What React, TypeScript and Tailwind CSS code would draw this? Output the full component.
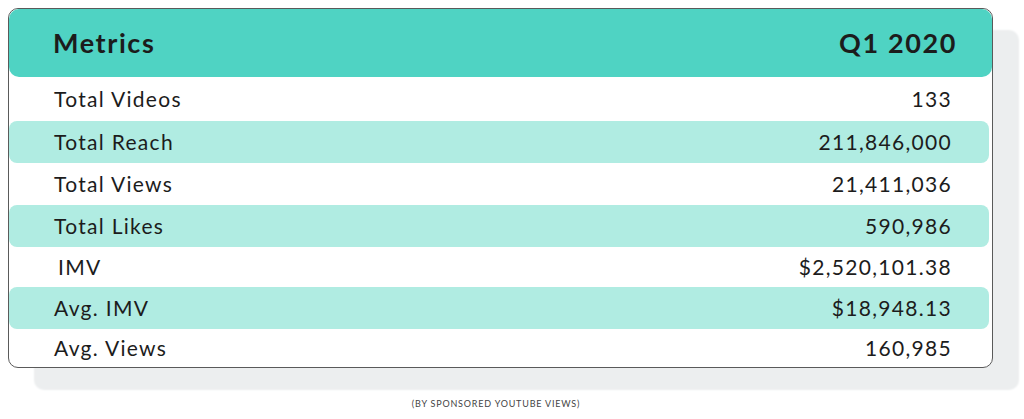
const rows = [
  { label: "Total Videos", value: "133", band: false, h: "h-[44px]" },
  { label: "Total Reach", value: "211,846,000", band: true, h: "h-[42px]" },
  { label: "Total Views", value: "21,411,036", band: false, h: "h-[42px]" },
  { label: "Total Likes", value: "590,986", band: true, h: "h-[42px]" },
  { label: "IMV", value: "$2,520,101.38", band: false, h: "h-[40px]", indent: true },
  { label: "Avg. IMV", value: "$18,948.13", band: true, h: "h-[42px]" },
  { label: "Avg. Views", value: "160,985", band: false, h: "h-[38px]" },
]

export default function App() {
  return (
    <main className="w-[1024px] h-[419px] bg-white pt-2 pl-2 font-['Lato',sans-serif] text-[#1c1c1c]">
      <div className="w-[985px] h-[360px] rounded-[10px] border border-[#5a5a5a] bg-white flex flex-col shadow-[26px_22px_2px_0_#eceeef]">
        {/* header */}
        <div className="h-[68px] shrink-0 rounded-[10px] bg-[#4fd3c3] flex items-center justify-between pl-[44px] pr-[35px] tracking-[1.6px]">
          <span className="text-[27px] font-bold">Metrics</span>
          <span className="text-[27px] font-bold">Q1 2020</span>
        </div>
        {rows.map((r) => (
          <div
            key={r.label}
            className={`${r.h} shrink-0 flex items-center justify-between pl-[45px] pr-[40px] text-[21px] tracking-[1.3px] ${
              r.band ? "bg-[#b0ece2] rounded-[8px] mr-[3px]" : ""
            }`}
          >
            <span className={r.indent ? "pl-[4px]" : ""}>{r.label}</span>
            <span className={r.band ? "-mr-[3px]" : ""}>{r.value}</span>
          </div>
        ))}
      </div>
      <p className="mt-[29px] text-center text-[9px] text-[#444] tracking-[0.8px] pr-[40px]">(BY SPONSORED YOUTUBE VIEWS)</p>
    </main>
  )
}
